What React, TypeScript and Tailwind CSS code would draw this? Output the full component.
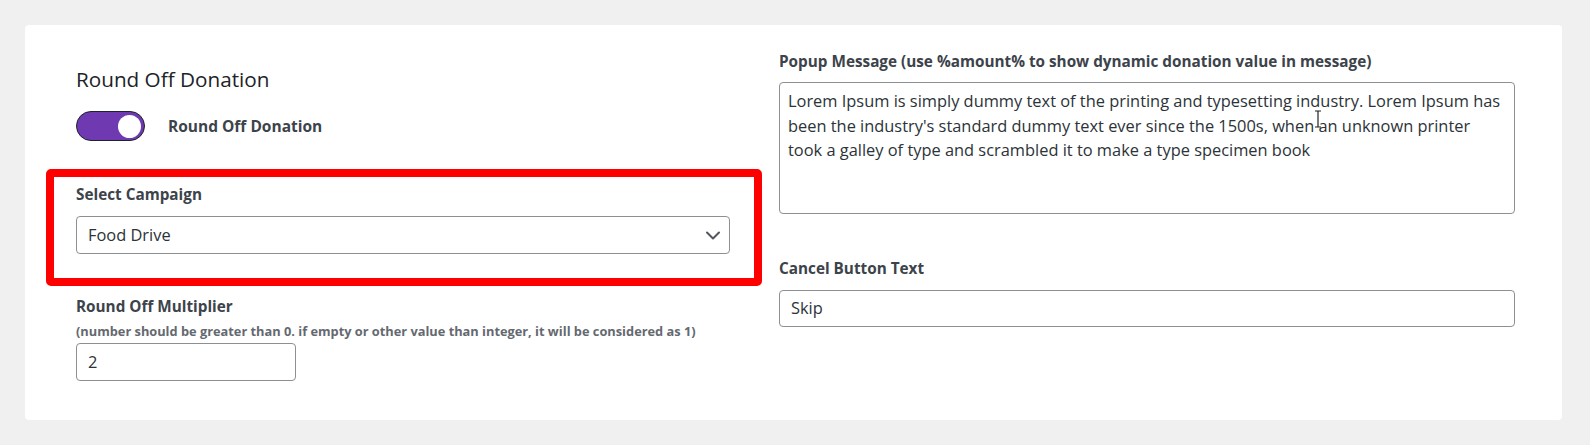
import React from "react";

const font = { fontFamily: '"Open Sans", "Noto Sans", sans-serif' };

export default function App() {
  return (
    <div className="w-full h-[445px] overflow-hidden bg-[#f0f0f0] pt-[25px] pl-[25px]" style={font}>
      <div className="w-[1537px] h-[395px] bg-white rounded-[4px] flex pl-[51px]">
        {/* Left column */}
        <div className="w-[654px] flex flex-col pt-[41px]">
          <h2 className="text-[20.7px] leading-[26px] text-[#1d2327] font-normal">Round Off Donation</h2>
          <div className="mt-[19px] flex items-center gap-[23px]">
            <div className="w-[69px] h-[30px] rounded-full bg-[#6f3ab1] border border-[#1d2327] flex items-center justify-end pr-[3px]">
              <div className="w-[23px] h-[23px] rounded-full bg-white" />
            </div>
            <span className="text-[15.5px] leading-[20px] font-bold text-[#3c434a]">Round Off Donation</span>
          </div>

          <div className="mt-[28px] -ml-[30px] w-[716px] border-[8px] border-[#ff0000] rounded-[5px] pt-[7px] pb-[24px] px-[22px]">
            <label className="block text-[15.3px] leading-[20px] font-bold text-[#3c434a]">Select Campaign</label>
            <div className="mt-[12px] h-[38px] w-[654px] border border-[#8c8f94] rounded-[4px] flex items-center justify-between pl-[11px] pr-[8px]">
              <span className="text-[16.4px] text-[#2c3338]">Food Drive</span>
              <svg width="16" height="16" viewBox="0 0 16 16" fill="none">
                <path d="M2 5.5l6 6 6-6" stroke="#50575e" strokeWidth="2" strokeLinecap="round" strokeLinejoin="round" />
              </svg>
            </div>
          </div>

          <label className="mt-[10px] block text-[15.3px] leading-[20px] font-bold text-[#3c434a]">Round Off Multiplier</label>
          <p className="mt-[7px] text-[12.8px] leading-[16px] font-bold text-[#646970] whitespace-nowrap">
            (number should be greater than 0. if empty or other value than integer, it will be considered as 1)
          </p>
          <div className="mt-[4px] h-[38px] w-[220px] border border-[#8c8f94] rounded-[4px] flex items-center pl-[11px]">
            <span className="text-[16.4px] text-[#2c3338]">2</span>
          </div>
        </div>

        {/* Right column */}
        <div className="ml-[49px] w-[736px] flex flex-col pt-[26px]">
          <label className="block text-[15.3px] leading-[20px] font-bold text-[#3c434a] whitespace-nowrap">
            Popup Message (use %amount% to show dynamic donation value in message)
          </label>
          <div className="relative mt-[11px] h-[132px] w-[736px] border border-[#8c8f94] rounded-[4px] pl-[8px] pr-[2px] pt-[6px]">
            <p className="text-[16.4px] leading-[24.5px] text-[#2c3338] whitespace-nowrap">
              Lorem Ipsum is simply dummy text of the printing and typesetting industry. Lorem Ipsum has
              <br />
              been the industry's standard dummy text ever since the 1500s, when an unknown printer
              <br />
              took a galley of type and scrambled it to make a type specimen book
            </p>
            <svg className="absolute left-[534px] top-[27px]" width="8" height="18" viewBox="0 0 8 18" fill="none">
              <path d="M1 1h6M4 1v16M1 17h6" stroke="#1d2327" strokeWidth="1.2" />
            </svg>
          </div>
          <label className="mt-[44px] block text-[15.3px] leading-[20px] font-bold text-[#3c434a]">Cancel Button Text</label>
          <div className="mt-[12px] h-[37px] w-[736px] border border-[#8c8f94] rounded-[4px] flex items-center pl-[11px]">
            <span className="text-[16.4px] text-[#2c3338]">Skip</span>
          </div>
        </div>
      </div>
    </div>
  );
}
